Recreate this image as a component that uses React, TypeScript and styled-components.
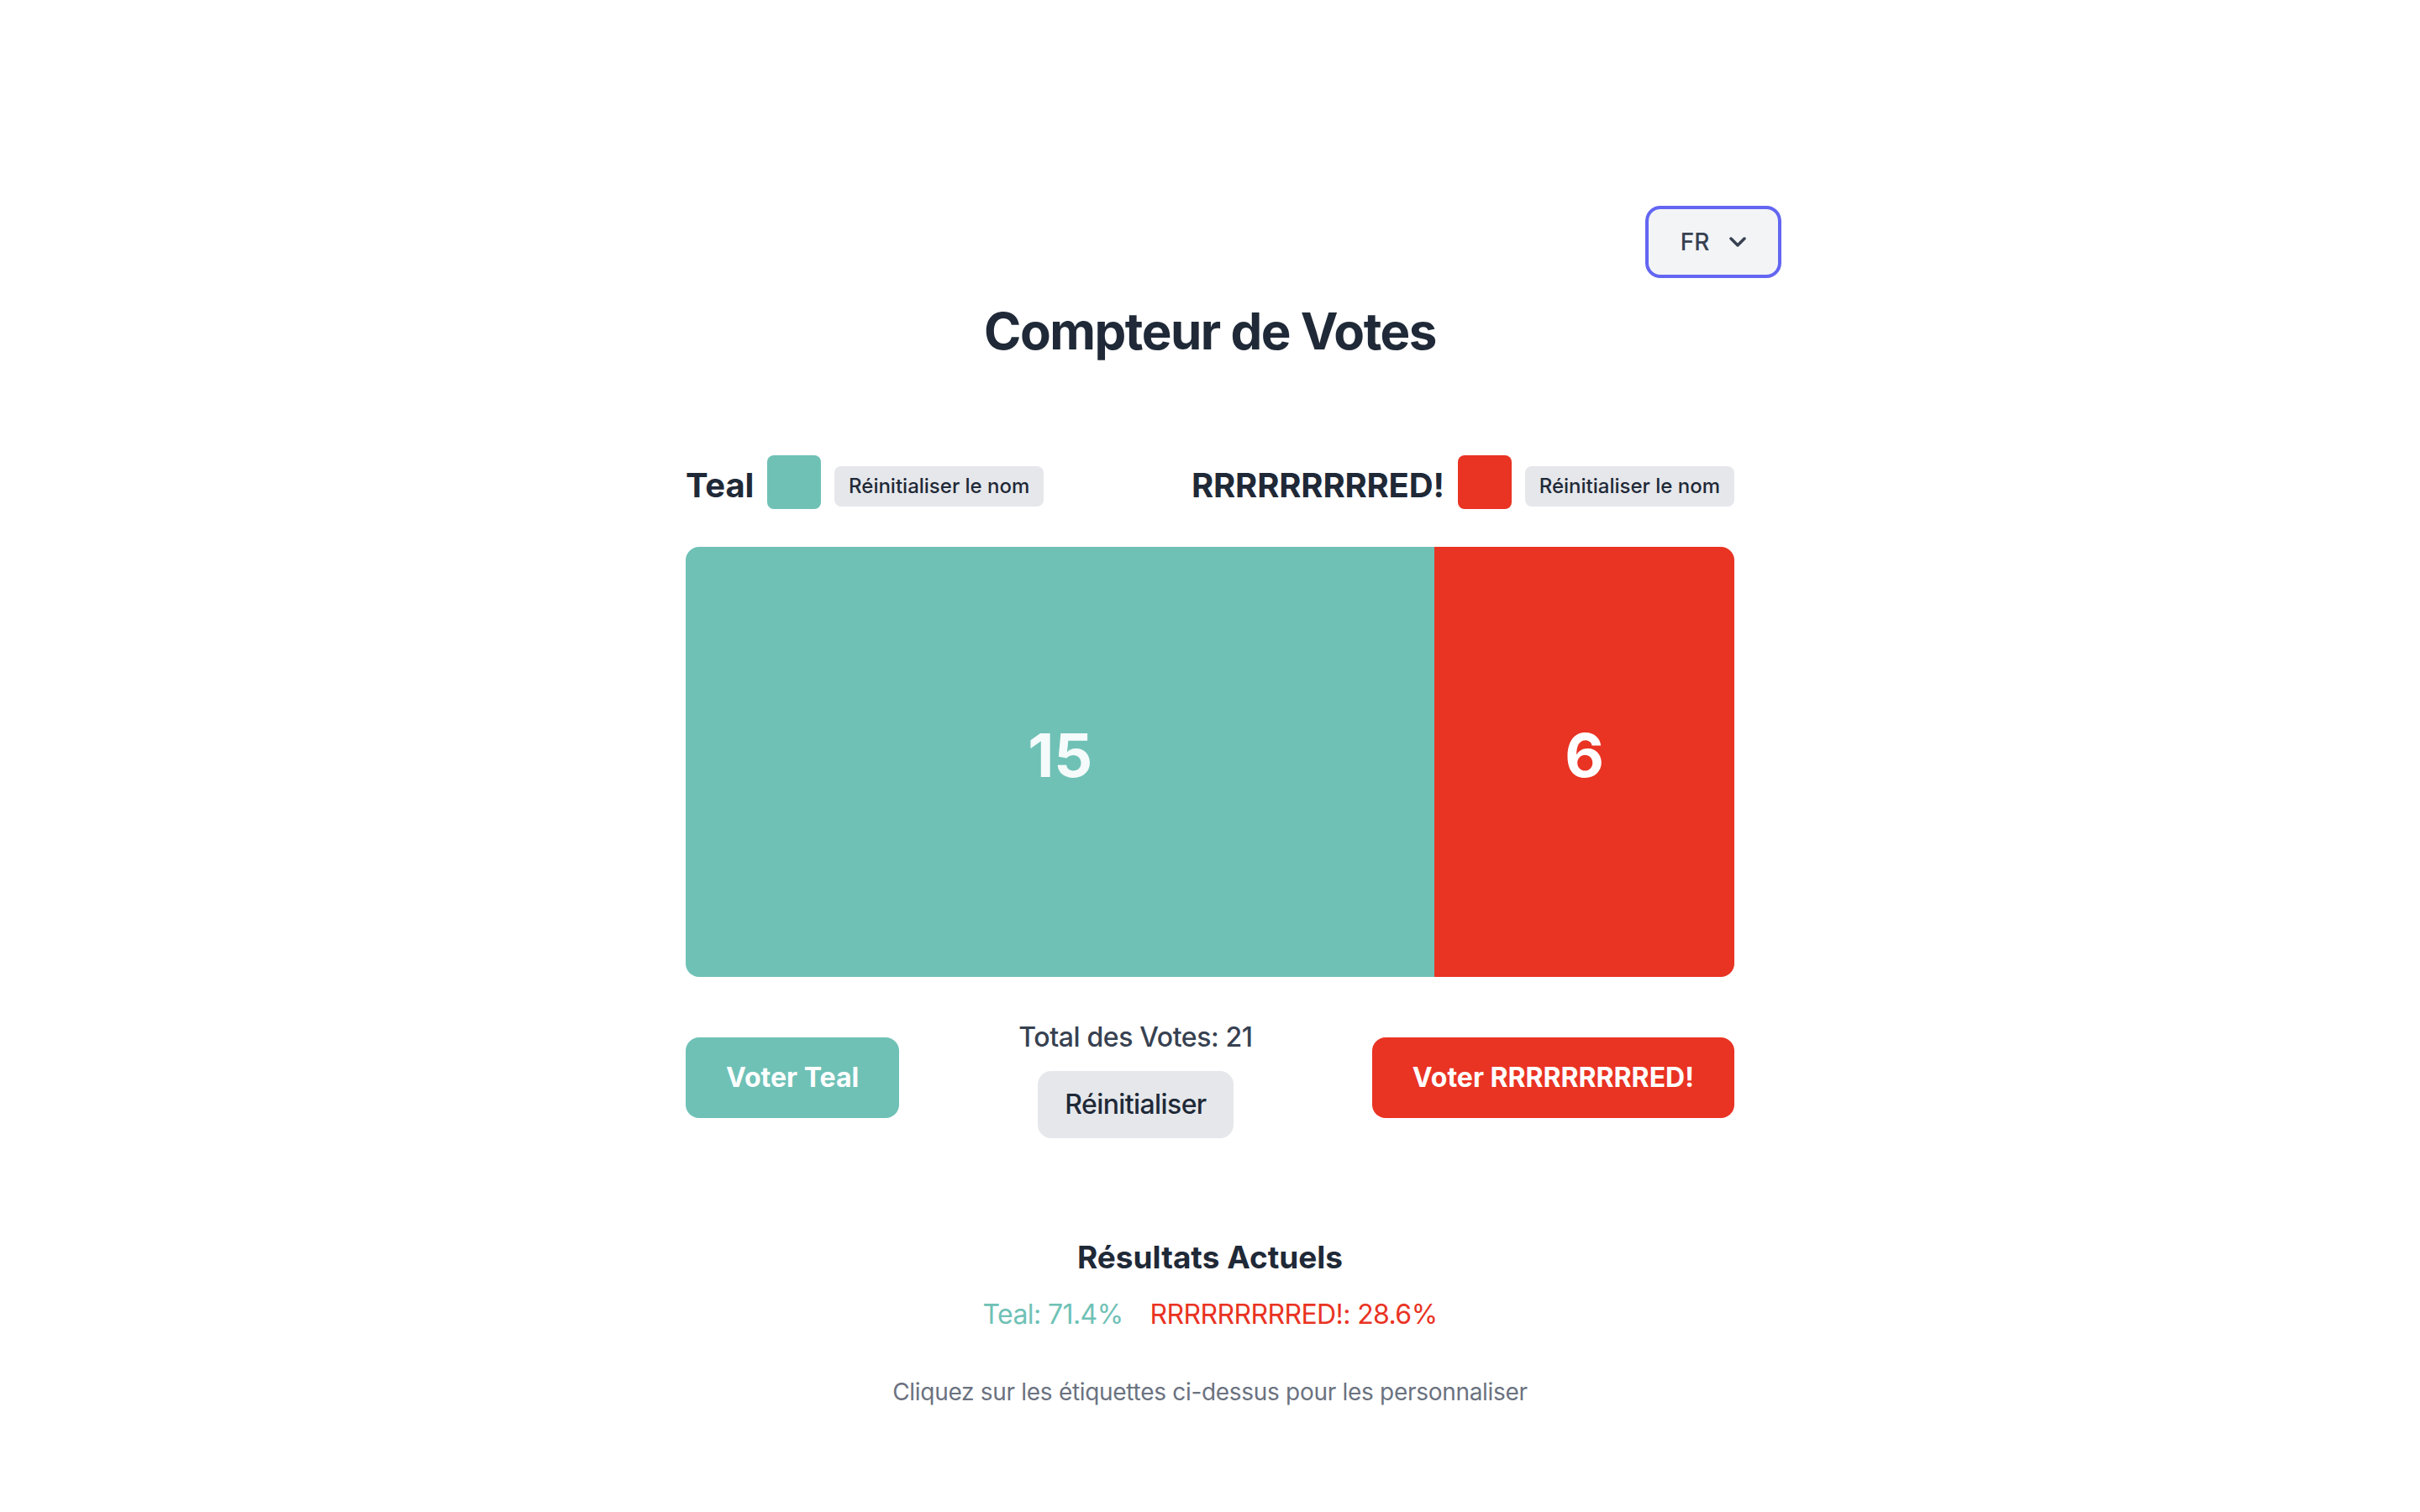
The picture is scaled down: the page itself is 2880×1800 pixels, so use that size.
import React, { useState } from "react";
import styled, { createGlobalStyle } from "styled-components";

const TEAL = "#6fc1b6";
const RED = "#e93323";

const GlobalStyle = createGlobalStyle`
  html, body {
    margin: 0;
    padding: 0;
    background: #ffffff;
  }
  body {
    font-family: Inter, "Noto Sans", "Liberation Sans", sans-serif;
    -webkit-font-smoothing: antialiased;
  }
  * { box-sizing: border-box; }
`;

const Page = styled.div`
  min-height: 1800px;
  padding-top: 245px;
`;

const Container = styled.main`
  width: 1248px;
  margin: 0 auto;
`;

const TopBar = styled.div`
  display: flex;
  justify-content: flex-end;
  margin-right: -56px;
`;

const LangSelect = styled.button`
  width: 162px;
  height: 86px;
  display: flex;
  align-items: center;
  justify-content: center;
  gap: 24px;
  background: #f3f4f6;
  border: 4px solid #6366f1;
  border-radius: 18px;
  color: #374151;
  font-family: inherit;
  font-size: 28px;
  font-weight: 500;
  line-height: 40px;
  padding: 0;
  cursor: pointer;
`;

const Title = styled.h1`
  margin: 27px 0 0;
  text-align: center;
  font-size: 60px;
  line-height: 72px;
  font-weight: 700;
  letter-spacing: -1.5px;
  color: #1f2937;
`;

const LabelRow = styled.div`
  margin-top: 112px;
  height: 64px;
  display: flex;
  justify-content: space-between;
  align-items: flex-end;
`;

const LabelGroup = styled.div`
  display: flex;
  align-items: flex-end;
  gap: 16px;
`;

const TeamName = styled.h2`
  margin: 0;
  font-size: 40px;
  line-height: 56px;
  font-weight: 700;
  letter-spacing: -0.2px;
  color: #1f2937;
`;

const Swatch = styled.div<{ $color: string }>`
  width: 64px;
  height: 64px;
  border-radius: 8px;
  background: ${(p) => p.$color};
`;

const SmallButton = styled.button`
  margin-bottom: 3px;
  padding: 8px 17px;
  border: none;
  border-radius: 8px;
  background: #e5e7eb;
  color: #1f2937;
  font-family: inherit;
  font-size: 24px;
  line-height: 32px;
  font-weight: 500;
  cursor: pointer;
`;

const Bar = styled.div`
  margin-top: 45px;
  height: 512px;
  display: flex;
  border-radius: 16px;
  overflow: hidden;
`;

const Segment = styled.div<{ $color: string; $text: string }>`
  height: 100%;
  display: flex;
  align-items: center;
  justify-content: center;
  padding-bottom: 16px;
  background: ${(p) => p.$color};
  color: ${(p) => p.$text};
  font-size: 72px;
  line-height: 80px;
  font-weight: 700;
`;

const ActionRow = styled.div`
  margin-top: 48px;
  display: flex;
  justify-content: space-between;
  align-items: center;
`;

const VoteButton = styled.button<{ $color: string }>`
  padding: 24px 48px;
  border: none;
  border-radius: 16px;
  background: ${(p) => p.$color};
  color: #ffffff;
  font-family: inherit;
  font-size: 32px;
  line-height: 48px;
  font-weight: 700;
  cursor: pointer;
`;

const Middle = styled.div`
  display: flex;
  flex-direction: column;
  align-items: center;
`;

const TotalText = styled.p`
  margin: 0 0 16px;
  font-size: 32px;
  line-height: 48px;
  font-weight: 500;
  letter-spacing: -0.4px;
  color: #374151;
`;

const ResetButton = styled.button`
  padding: 16px 32px;
  border: none;
  border-radius: 16px;
  background: #e5e7eb;
  color: #1f2937;
  font-family: inherit;
  font-size: 32px;
  line-height: 48px;
  font-weight: 500;
  letter-spacing: -0.6px;
  cursor: pointer;
`;

const Results = styled.section`
  margin-top: 114px;
  text-align: center;
`;

const ResultsTitle = styled.h3`
  margin: 0 0 16px;
  font-size: 37px;
  line-height: 56px;
  font-weight: 700;
  letter-spacing: 0;
  color: #1f2937;
`;

const PercentRow = styled.div`
  display: flex;
  justify-content: center;
  gap: 32px;
`;

const Percent = styled.span<{ $color: string }>`
  font-size: 32px;
  line-height: 48px;
  font-weight: 400;
  letter-spacing: -0.6px;
  color: ${(p) => p.$color};
`;

const Hint = styled.p`
  margin: 48px 0 0;
  font-size: 28px;
  line-height: 40px;
  letter-spacing: -0.3px;
  color: #6b7280;
`;

const Chevron = () => (
  <svg width="20" height="12" viewBox="0 0 20 12" fill="none">
    <path
      d="M2 2 L10 10 L18 2"
      stroke="#374151"
      strokeWidth="3.5"
      strokeLinecap="round"
      strokeLinejoin="round"
    />
  </svg>
);

export default function App() {
  const [teal, setTeal] = useState(15);
  const [red, setRed] = useState(6);
  const total = teal + red;
  const tealPct = total ? (teal / total) * 100 : 50;
  const redPct = total ? (red / total) * 100 : 50;
  const redName = "RRRRRRRRRED!";

  return (
    <Page>
      <GlobalStyle />
      <Container>
        <TopBar>
          <LangSelect>
            <span>FR</span>
            <Chevron />
          </LangSelect>
        </TopBar>
        <Title>Compteur de Votes</Title>

        <LabelRow>
          <LabelGroup>
            <TeamName>Teal</TeamName>
            <Swatch $color={TEAL} />
            <SmallButton>Réinitialiser le nom</SmallButton>
          </LabelGroup>
          <LabelGroup>
            <TeamName>{redName}</TeamName>
            <Swatch $color={RED} />
            <SmallButton>Réinitialiser le nom</SmallButton>
          </LabelGroup>
        </LabelRow>

        <Bar>
          <Segment $color={TEAL} $text="#f5fafa" style={{ width: `${tealPct}%` }}>
            {teal}
          </Segment>
          <Segment $color={RED} $text="#ffffff" style={{ width: `${redPct}%` }}>
            {red}
          </Segment>
        </Bar>

        <ActionRow>
          <VoteButton $color={TEAL} onClick={() => setTeal(teal + 1)}>
            Voter Teal
          </VoteButton>
          <Middle>
            <TotalText>Total des Votes: {total}</TotalText>
            <ResetButton
              onClick={() => {
                setTeal(0);
                setRed(0);
              }}
            >
              Réinitialiser
            </ResetButton>
          </Middle>
          <VoteButton $color={RED} onClick={() => setRed(red + 1)}>
            Voter {redName}
          </VoteButton>
        </ActionRow>

        <Results>
          <ResultsTitle>Résultats Actuels</ResultsTitle>
          <PercentRow>
            <Percent $color={TEAL}>Teal: {tealPct.toFixed(1)}%</Percent>
            <Percent $color={RED}>
              {redName}: {redPct.toFixed(1)}%
            </Percent>
          </PercentRow>
          <Hint>Cliquez sur les étiquettes ci-dessus pour les personnaliser</Hint>
        </Results>
      </Container>
    </Page>
  );
}
